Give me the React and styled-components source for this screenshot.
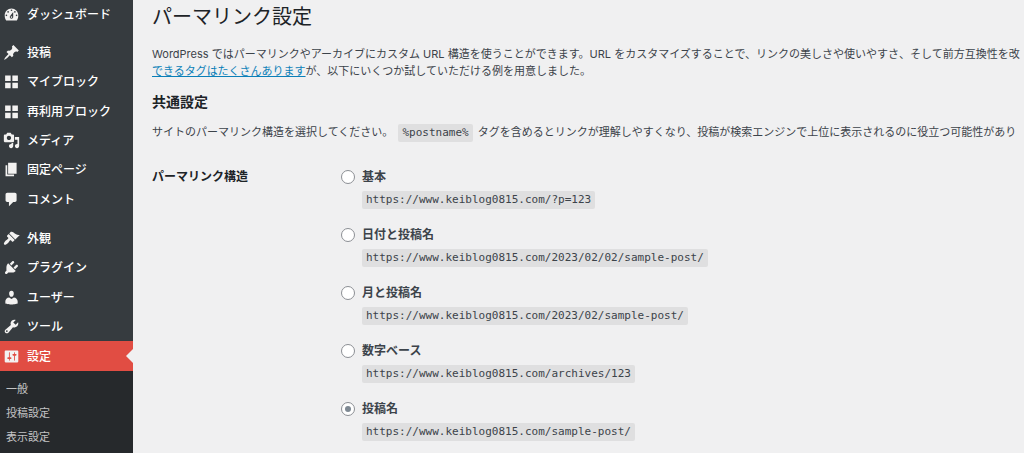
import React, { useState } from "react";
import styled, { createGlobalStyle } from "styled-components";

const GlobalStyle = createGlobalStyle`
  * {
    box-sizing: border-box;
  }

  body {
    margin: 0;
    background: #f0f0f1;
    color: #3c434a;
    font-family: Inter, "Noto Sans CJK JP", sans-serif;
    font-size: 11px;
    line-height: 17px;
    overflow-x: hidden;
  }
`;

const Page = styled.div`
  display: flex;
  min-height: 100vh;
`;

const Sidebar = styled.nav`
  flex: 0 0 133px;
  background: #363b3f;
`;

const MenuGroup = styled.ul`
  margin: 0 0 10px;
  padding: 0;
  list-style: none;

  &:last-child {
    margin-bottom: 0;
  }
`;

const MenuItem = styled.li`
  height: ${(props) => (props.$first ? "28px" : "29px")};

  &:nth-child(3n) {
    height: 30px;
  }

  &:last-child {
    height: ${(props) => (props.$open ? "auto" : "")};
  }
`;

const MenuLink = styled.a`
  position: relative;
  display: flex;
  align-items: center;
  gap: 7px;
  height: ${(props) => (props.$current ? "30px" : "100%")};
  padding-left: 3px;
  background: ${(props) => (props.$current ? "#e14d43" : "transparent")};
  color: #fff;
  font-size: 12px;
  font-weight: 500;
  text-decoration: none;
  white-space: nowrap;

  &::after {
    content: "";
    display: ${(props) => (props.$current ? "block" : "none")};
    position: absolute;
    right: 0;
    top: 8px;
    border: 7px solid transparent;
    border-left-width: 0;
    border-right-color: #f0f0f1;
  }
`;

const Icon = styled.svg`
  flex: none;
  width: 17px;
  height: 17px;
  fill: #f3f2f1;
`;

const SubMenu = styled.ul`
  margin: 0;
  padding: 6px 0 5px;
  list-style: none;
  background: #26292c;
`;

const SubLink = styled.a`
  display: block;
  padding-left: 6px;
  color: #c3c4c5;
  line-height: 24px;
  text-decoration: none;
`;

const Content = styled.main`
  flex: 1;
  min-width: 0;
  padding-left: 19px;
  overflow: hidden;
`;

const Title = styled.h1`
  margin: 4px 0 16px;
  color: #1d2327;
  font-size: 20px;
  font-weight: 400;
  line-height: 26px;
`;

const SectionTitle = styled.h2`
  margin: 12px 0;
  color: #1d2327;
  font-size: 14px;
  font-weight: 700;
  line-height: 20px;
`;

const Code = styled.code`
  display: inline-block;
  padding: 0 4px;
  border-radius: 2px;
  background: #dfdfe0;
  color: #3c434a;
  font-family: "DejaVu Sans Mono", monospace;
  font-size: 11px;
  line-height: 18px;
  white-space: nowrap;
`;

const Text = styled.p`
  margin: 0;
  white-space: nowrap;

  ${Code} {
    margin: 0 2px;
  }
`;

const TextLink = styled.a`
  color: #0a7fb8;
`;

const Field = styled.fieldset`
  display: grid;
  grid-template-columns: 189px 1fr;
  margin: 25px 0 0;
  padding: 0;
  border: 0;
`;

const FieldName = styled.div`
  color: #1d2327;
  font-size: 12px;
  font-weight: 700;
  line-height: 20px;
`;

const Options = styled.div`
  display: grid;
  gap: 16px;
`;

const Option = styled.div`
  display: grid;
  grid-template-columns: 14px 1fr;
  column-gap: 7px;
  row-gap: 4px;
  align-items: center;
  justify-items: start;

  ${Code} {
    grid-column: 2;
  }
`;

const Radio = styled.input`
  appearance: none;
  display: grid;
  place-items: center;
  width: 14px;
  height: 14px;
  margin: 0;
  border: 1px solid #8c8f94;
  border-radius: 50%;
  background: #fff;

  &:checked::before {
    content: "";
    width: 6px;
    height: 6px;
    border-radius: 50%;
    background: #7e8993;
  }
`;

const OptionLabel = styled.label`
  font-size: 12px;
  font-weight: 700;
  line-height: 20px;
`;

const icons = {
  dashboard:
    "M3.76 17h12.48c1.34-1.63 1.76-3.77 1.76-6 0-4.42-3.58-8-8-8s-8 3.58-8 8c0 2.23.42 4.37 1.76 6zM10 4c.55 0 1 .45 1 1s-.45 1-1 1-1-.45-1-1 .45-1 1-1zM6 6c.55 0 1 .45 1 1s-.45 1-1 1-1-.45-1-1 .45-1 1-1zm8 0c.55 0 1 .45 1 1s-.45 1-1 1-1-.45-1-1 .45-1 1-1zm-5.37 5.55L12 7v6c0 1.1-.9 2-2 2s-2-.9-2-2c0-.57.24-1.08.63-1.45zM4 10c.55 0 1 .45 1 1s-.45 1-1 1-1-.45-1-1 .45-1 1-1zm12 0c.55 0 1 .45 1 1s-.45 1-1 1-1-.45-1-1 .45-1 1-1zm-5 3c0-.55-.45-1-1-1s-1 .45-1 1 .45 1 1 1 1-.45 1-1z",
  post: "M10.44 3.02l1.82-1.82 6.36 6.35-1.83 1.82c-1.05-.68-2.48-.57-3.41.36l-.75.75c-.92.93-1.04 2.35-.35 3.41l-1.83 1.82-2.41-2.41-2.8 2.79c-.42.42-3.38 2.71-3.8 2.29s1.86-3.39 2.28-3.81l2.79-2.79L4.1 9.36l1.83-1.82c1.05.69 2.48.57 3.4-.36l.75-.75c.93-.92 1.05-2.35.36-3.41z",
  blocks: "M2.5 3h6.5v6.5H2.5zM11 3h6.5v6.5H11zM2.5 11.5h6.5V18H2.5zM11 11.5h6.5V18H11z",
  media:
    "M13 11V4c0-.55-.45-1-1-1h-1.67L9 1H5L3.67 3H2c-.55 0-1 .45-1 1v7c0 .55.45 1 1 1h10c.55 0 1-.45 1-1zM7 4.5c1.38 0 2.5 1.12 2.5 2.5S8.38 9.5 7 9.5 4.5 8.38 4.5 7 5.62 4.5 7 4.5zM14 6h5v10.5c0 1.38-1.12 2.5-2.5 2.5S14 17.88 14 16.5s1.12-2.5 2.5-2.5c.17 0 .34.02.5.05V9h-3V6zm-4 8.05V13h2v3.5c0 1.38-1.12 2.5-2.5 2.5S7 17.88 7 16.5 8.12 14 9.5 14c.17 0 .34.02.5.05z",
  page: "M6 15V2h10v13H6zm-1 1h8v2H3V5h2v11z",
  comments:
    "M5 2h9c1.1 0 2 .9 2 2v7c0 1.1-.9 2-2 2h-2l-5 5v-5H5c-1.1 0-2-.9-2-2V4c0-1.1.9-2 2-2z",
  appearance:
    "M14.48 11.06L7.41 3.99l1.5-1.5c.5-.56 2.3-.47 3.51.32 1.21.8 1.43 1.28 2.91 2.1 1.18.64 2.45 1.26 4.45.85zm-.71.71L6.7 4.7 4.93 6.47c-.39.39-.39 1.02 0 1.41l1.06 1.06c.39.39.39 1.03 0 1.42-.6.6-1.43 1.11-2.21 1.69-.35.26-.7.53-1.01.84C1.43 14.23.4 16.08 1.4 17.07c.99 1 2.84-.03 4.18-1.36.31-.31.58-.66.85-1.02.57-.78 1.08-1.61 1.69-2.21.39-.39 1.02-.39 1.41 0l1.06 1.06c.39.39 1.02.39 1.41 0z",
  plugins:
    "M13.11 4.36L9.87 7.6 8 5.73l3.24-3.24c.35-.34 1.05-.2 1.56.32.52.51.66 1.21.31 1.55zm-8 1.77l.91-1.12 9.01 9.01-1.19.84c-.71.71-2.63 1.16-3.82 1.16H6.14L4.9 17.26c-.59.59-1.54.59-2.12 0-.59-.58-.59-1.53 0-2.12l1.24-1.24v-3.88c0-1.13.4-3.19 1.09-3.89zm7.26 3.97l3.24-3.24c.34-.35 1.04-.21 1.55.31.52.51.66 1.21.31 1.55l-3.24 3.25z",
  users:
    "M10 9.25c-2.27 0-2.73-3.44-2.73-3.44C7 4.02 7.82 2 9.97 2c2.16 0 2.98 2.02 2.71 3.81 0 0-.41 3.44-2.68 3.44zm0 2.57L12.72 10c2.39 0 4.52 2.33 4.52 4.53v2.49s-3.65 1.13-7.24 1.13c-3.65 0-7.24-1.13-7.24-1.13v-2.49c0-2.25 1.94-4.48 4.47-4.48z",
  tools:
    "M16.68 9.77c-1.34 1.34-3.3 1.67-4.95.99l-5.41 6.52c-.99.99-2.59.99-3.58 0s-.99-2.59 0-3.57l6.52-5.42c-.68-1.65-.35-3.61.99-4.95 1.28-1.28 3.12-1.62 4.72-1.06l-2.89 2.89 2.82 2.82 2.86-2.87c.53 1.58.18 3.39-1.08 4.65zM3.81 16.21c.4.39 1.04.39 1.43 0 .4-.4.4-1.04 0-1.43-.39-.4-1.03-.4-1.43 0-.39.39-.39 1.03 0 1.43z",
  settings:
    "M18 16V4c0-.55-.45-1-1-1H3c-.55 0-1 .45-1 1v12c0 .55.45 1 1 1h14c.55 0 1-.45 1-1zM8 11h1c.55 0 1 .45 1 1s-.45 1-1 1H8v1.5c0 .28-.22.5-.5.5s-.5-.22-.5-.5V13H6c-.55 0-1-.45-1-1s.45-1 1-1h1V5.5c0-.28.22-.5.5-.5s.5.22.5.5V11zm5-2h-1c-.55 0-1-.45-1-1s.45-1 1-1h1V5.5c0-.28.22-.5.5-.5s.5.22.5.5V7h1c.55 0 1 .45 1 1s-.45 1-1 1h-1v5.5c0 .28-.22.5-.5.5s-.5-.22-.5-.5V9z",
};

const menu = [
  [{ icon: "dashboard", label: "ダッシュボード", first: true }],
  [
    { icon: "post", label: "投稿" },
    { icon: "blocks", label: "マイブロック" },
    { icon: "blocks", label: "再利用ブロック" },
    { icon: "media", label: "メディア" },
    { icon: "page", label: "固定ページ" },
    { icon: "comments", label: "コメント" },
  ],
  [
    { icon: "appearance", label: "外観" },
    { icon: "plugins", label: "プラグイン" },
    { icon: "users", label: "ユーザー" },
    { icon: "tools", label: "ツール" },
    {
      icon: "settings",
      label: "設定",
      children: ["一般", "投稿設定", "表示設定"],
    },
  ],
];

const site = "https://www.keiblog0815.com";

const structures = [
  { id: "plain", label: "基本", path: "/?p=123" },
  { id: "day", label: "日付と投稿名", path: "/2023/02/02/sample-post/" },
  { id: "month", label: "月と投稿名", path: "/2023/02/sample-post/" },
  { id: "numeric", label: "数字ベース", path: "/archives/123" },
  { id: "name", label: "投稿名", path: "/sample-post/" },
];

const AdminMenu = () => (
  <Sidebar>
    {menu.map((group) => (
      <MenuGroup key={group[0].label}>
        {group.map(({ icon, label, first, children }) => (
          <MenuItem key={label} $first={first} $open={!!children}>
            <MenuLink href="#" $current={!!children}>
              <Icon viewBox="0 0 20 20" aria-hidden="true">
                <path d={icons[icon]} fillRule="evenodd" />
              </Icon>
              {label}
            </MenuLink>
            {children && (
              <SubMenu>
                {children.map((child) => (
                  <li key={child}>
                    <SubLink href="#">{child}</SubLink>
                  </li>
                ))}
              </SubMenu>
            )}
          </MenuItem>
        ))}
      </MenuGroup>
    ))}
  </Sidebar>
);

const App = () => {
  const [structure, setStructure] = useState("name");

  return (
    <>
      <GlobalStyle />
      <Page lang="ja">
        <AdminMenu />
        <Content>
          <Title>パーマリンク設定</Title>
          <Text>
            WordPress ではパーマリンクやアーカイブにカスタム URL
            構造を使うことができます。URL
            をカスタマイズすることで、リンクの美しさや使いやすさ、そして前方互換性を改
            <br />
            <TextLink href="#">できるタグはたくさんあります</TextLink>
            が、以下にいくつか試していただける例を用意しました。
          </Text>
          <SectionTitle>共通設定</SectionTitle>
          <Text>
            サイトのパーマリンク構造を選択してください。 <Code>%postname%</Code>{" "}
            タグを含めるとリンクが理解しやすくなり、投稿が検索エンジンで上位に表示されるのに役立つ可能性があり
          </Text>
          <Field aria-labelledby="structure-name">
            <FieldName id="structure-name">パーマリンク構造</FieldName>
            <Options>
              {structures.map(({ id, label, path }) => (
                <Option key={id}>
                  <Radio
                    type="radio"
                    name="structure"
                    id={id}
                    checked={structure === id}
                    onChange={() => setStructure(id)}
                  />
                  <OptionLabel htmlFor={id}>{label}</OptionLabel>
                  <Code>
                    {site}
                    {path}
                  </Code>
                </Option>
              ))}
            </Options>
          </Field>
        </Content>
      </Page>
    </>
  );
};

export default App;
